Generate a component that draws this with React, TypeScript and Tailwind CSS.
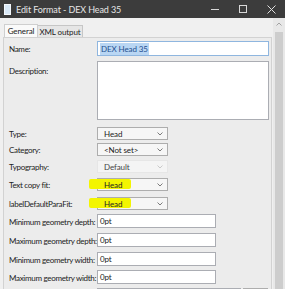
import React from 'react';

const Chevron = ({ faint }: { faint?: boolean }) => (
  <svg width="6" height="4" viewBox="0 0 6 4" className="shrink-0">
    <path d="M0.5 0.5 L3 3 L5.5 0.5" fill="none" stroke={faint ? '#c4c4c4' : '#6d6d6d'} strokeWidth="0.9" />
  </svg>
);

const Select = ({ value, disabled, mark }: { value: string; disabled?: boolean; mark?: boolean }) => (
  <div
    className={`relative w-[71px] h-[13px] flex items-center justify-between pl-[6px] pr-[4px] border ${
      disabled ? 'border-[#e6e6e6] bg-[#f4f4f4] text-[#444]' : 'border-[#adadad] bg-[#f6f6f6]'
    }`}
  >
    {mark && <div className="absolute left-[-9px] top-[0px] w-[42px] h-[10px] bg-[#f3f500] rounded-[2px]" />}
    <span className="relative">{value}</span>
    <Chevron faint={disabled} />
  </div>
);

const TextBox = ({ value }: { value: string }) => (
  <div className="w-[119px] h-[14px] flex items-center pl-[2px] border border-[#abadb3] bg-white">{value}</div>
);

const Label = ({ children, top }: { children: React.ReactNode; top?: boolean }) => (
  <span className={`w-[88px] shrink-0 whitespace-nowrap tracking-[-0.3px] ${top ? 'pt-[6px]' : 'pt-[1px]'}`}>
    {children}
  </span>
);

export default function App() {
  return (
    <div className="w-[285px] h-[289px] overflow-hidden bg-[#f0f0f0] flex flex-col font-['Lato',sans-serif] text-[8px] tracking-[-0.1px] leading-none text-[#222]">
      {/* Title bar */}
      <div className="h-[18px] shrink-0 bg-[#3c3c3c] flex items-center text-[#e6e6e6] text-[9px]">
        <div className="ml-[4px] w-[7px] h-[11px] bg-[#d8e8f6] border border-[#f4f8fc]" />
        <span className="ml-[5px] whitespace-nowrap">Edit Format - DEX Head 35</span>
        <div className="ml-auto flex items-center">
          <div className="w-[28px] flex justify-center">
            <div className="w-[8px] h-px bg-[#d8d8d8]" />
          </div>
          <div className="w-[28px] flex justify-center">
            <div className="w-[8px] h-[8px] border border-[#d8d8d8]" />
          </div>
          <div className="w-[28px] flex justify-center">
            <svg width="9" height="9" viewBox="0 0 9 9">
              <path d="M0.5 0.5 L8.5 8.5 M8.5 0.5 L0.5 8.5" stroke="#e0e0e0" strokeWidth="1" />
            </svg>
          </div>
        </div>
      </div>

      <div className="flex-1 flex min-h-0">
        {/* Main area */}
        <div className="flex-1 flex flex-col pl-[3px] pt-[6px] min-w-0">
          {/* Tabs */}
          <div className="h-[13px] flex items-end shrink-0">
            <div className="h-[13px] w-[34px] ml-[1px] border border-b-0 border-[#cfcfcf] bg-[#fafafa] flex items-center justify-center whitespace-nowrap">
              General
            </div>
            <div className="h-[12px] w-[45px] border border-l-0 border-b-0 border-[#c6c6c6] bg-[#e6e6e6] flex items-center justify-center whitespace-nowrap">
              XML output
            </div>
          </div>

          {/* Panel */}
          <div className="flex-1 w-[269px] border border-b-0 border-[#d2d2d2] bg-[#ececec] pl-[5px] flex flex-col">
            <div className="mt-[3px] flex items-center">
              <Label>Name:</Label>
              <div className="w-[172px] h-[15px] flex items-center pl-[2px] border border-[#8fb6df] bg-white">
                <span className="bg-[#b9d6f3] text-[#1f4f8f] px-[1px] py-[2px]">DEX Head 35</span>
              </div>
            </div>

            <div className="mt-[5px] flex items-start">
              <Label top>Description:</Label>
              <div className="w-[172px] h-[59px] border border-[#abadb3] bg-white" />
            </div>

            <div className="mt-[7px] flex items-center">
              <Label>Type:</Label>
              <Select value="Head" />
            </div>

            <div className="mt-[3px] flex items-center">
              <Label>Category:</Label>
              <Select value="<Not set>" />
            </div>

            <div className="mt-[4px] flex items-center">
              <Label>Typography:</Label>
              <Select value="Default" disabled />
            </div>

            <div className="mt-[5px] flex items-center">
              <Label>Text copy fit:</Label>
              <Select value="Head" mark />
            </div>

            <div className="mt-[6px] flex items-center">
              <Label>labelDefaultParaFit:</Label>
              <Select value="Head" mark />
            </div>

            <div className="mt-[4px] flex items-center">
              <Label>Minimum geometry depth:</Label>
              <TextBox value="0pt" />
            </div>

            <div className="mt-[5px] flex items-center">
              <Label>Maximum geometry depth:</Label>
              <TextBox value="0pt" />
            </div>

            <div className="mt-[5px] flex items-center">
              <Label>Minimum geometry width:</Label>
              <TextBox value="0pt" />
            </div>

            <div className="mt-[4px] flex items-center">
              <Label>Maximum geometry width:</Label>
              <TextBox value="0pt" />
            </div>

            <div className="mt-[4px] flex items-center">
              <span className="w-[88px] shrink-0" />
              <div className="w-[144px] h-[14px] border border-[#abadb3] bg-[#f4f4f4]" />
              <div className="ml-[2px] w-[25px] h-[14px] border border-[#adadad] bg-[#e6e6e6]" />
            </div>
          </div>
        </div>

        {/* Scrollbar */}
        <div className="w-[12px] shrink-0 ml-[1px] bg-[#e8e8e8] flex flex-col items-center">
          <div className="h-[12px] flex items-center justify-center">
            <svg width="6" height="4" viewBox="0 0 6 4">
              <path d="M0.5 3.5 L3 1 L5.5 3.5" fill="none" stroke="#9a9a9a" strokeWidth="0.9" />
            </svg>
          </div>
          <div className="mt-[2px] w-[8px] flex-1 bg-[#cdcdcd]" />
        </div>
      </div>
    </div>
  );
}
